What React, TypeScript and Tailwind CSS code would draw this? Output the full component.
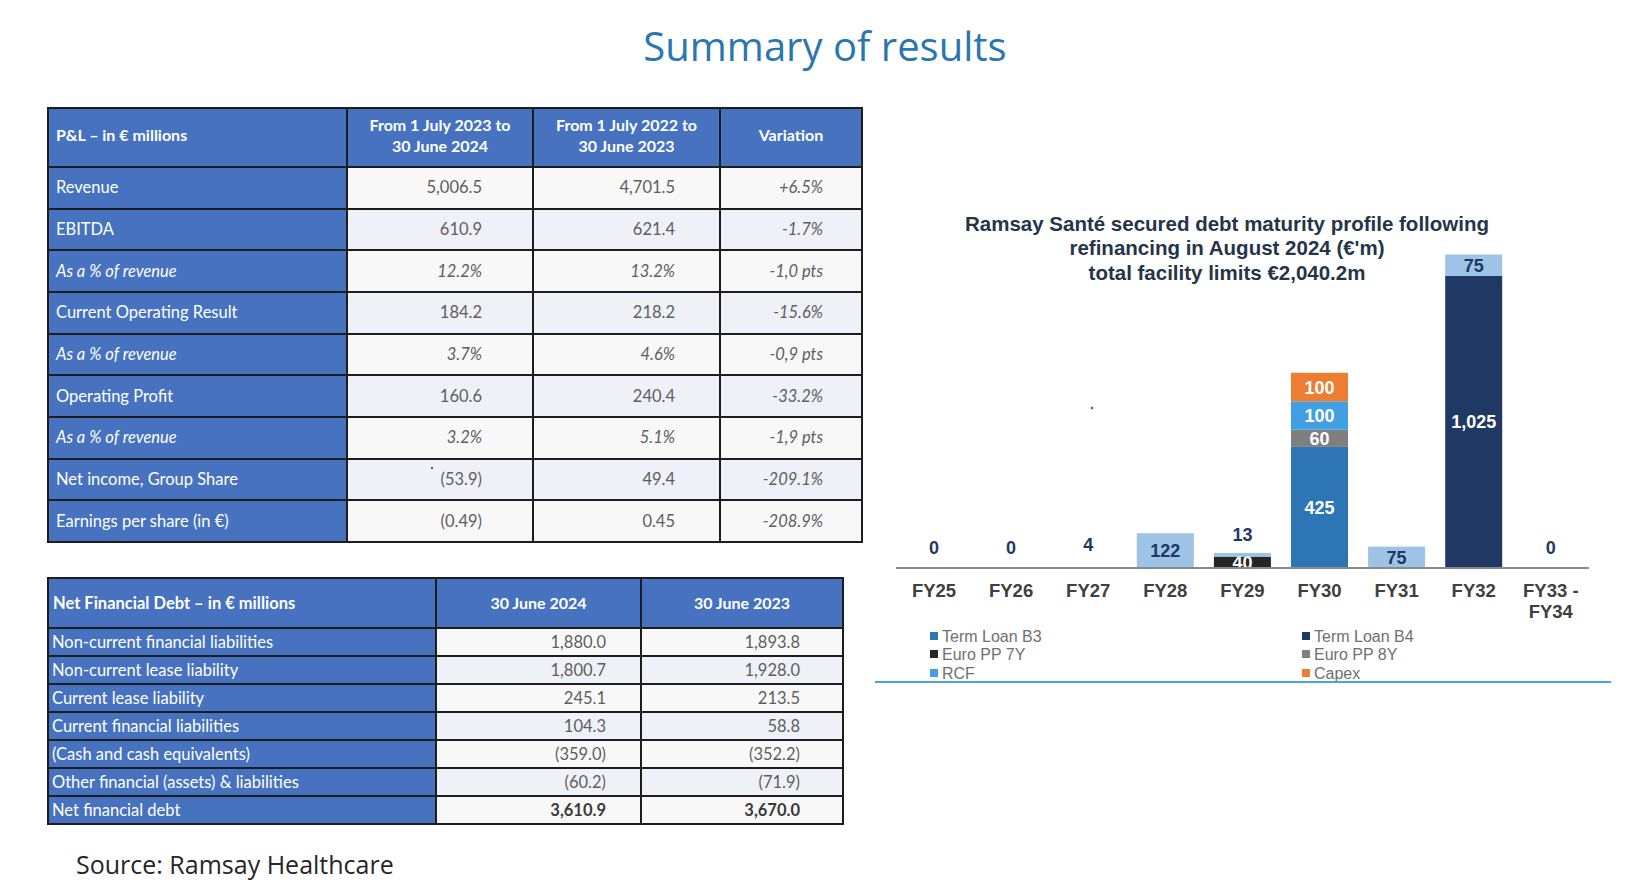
import React from "react";

type Row1 = { label: string; a: string; b: string; v: string; it?: boolean };

const pl: Row1[] = [
  { label: "Revenue", a: "5,006.5", b: "4,701.5", v: "+6.5%" },
  { label: "EBITDA", a: "610.9", b: "621.4", v: "-1.7%" },
  { label: "As a % of revenue", a: "12.2%", b: "13.2%", v: "-1,0 pts", it: true },
  { label: "Current Operating Result", a: "184.2", b: "218.2", v: "-15.6%" },
  { label: "As a % of revenue", a: "3.7%", b: "4.6%", v: "-0,9 pts", it: true },
  { label: "Operating Profit", a: "160.6", b: "240.4", v: "-33.2%" },
  { label: "As a % of revenue", a: "3.2%", b: "5.1%", v: "-1,9 pts", it: true },
  { label: "Net income, Group Share", a: "(53.9)", b: "49.4", v: "-209.1%" },
  { label: "Earnings per share (in €)", a: "(0.49)", b: "0.45", v: "-208.9%" },
];

const nfd: [string, string, string][] = [
  ["Non-current financial liabilities", "1,880.0", "1,893.8"],
  ["Non-current lease liability", "1,800.7", "1,928.0"],
  ["Current lease liability", "245.1", "213.5"],
  ["Current financial liabilities", "104.3", "58.8"],
  ["(Cash and cash equivalents)", "(359.0)", "(352.2)"],
  ["Other financial (assets) & liabilities", "(60.2)", "(71.9)"],
  ["Net financial debt", "3,610.9", "3,670.0"],
];

const cellB = "border-2 border-[#1d1d1d]";

function PLTable() {
  return (
    <table className="table-fixed border-collapse w-[814px] font-['Lato',sans-serif]">
      <colgroup>
        <col className="w-[299px]" />
        <col className="w-[186px]" />
        <col className="w-[187px]" />
        <col className="w-[142px]" />
      </colgroup>
      <thead>
        <tr className="h-[59px] bg-[#4672c0] text-white">
          <th className={`${cellB} text-left pl-[7px] pb-[6px] text-[16px] font-bold`}>P&amp;L – in € millions</th>
          <th className={`${cellB} text-center pb-[6px] text-[16px] leading-[21px] font-bold`}>
            From 1 July 2023 to
            <br />
            30 June 2024
          </th>
          <th className={`${cellB} text-center pb-[6px] text-[16px] leading-[21px] font-bold`}>
            From 1 July 2022 to
            <br />
            30 June 2023
          </th>
          <th className={`${cellB} text-center pb-[6px] text-[16px] font-bold`}>Variation</th>
        </tr>
      </thead>
      <tbody>
        {pl.map((r, i) => {
          const bg = i % 2 === 0 ? "bg-[#f8f8f8]" : "bg-[#eef1f8]";
          const it = r.it ? "italic" : "";
          return (
            <tr key={i} className="h-[41.67px] text-[16.5px]">
              <td className={`${cellB} bg-[#4672c0] text-white pl-[7px] ${it}`}>{r.label}</td>
              <td className={`${cellB} ${bg} text-right pr-[50px] text-[#5e5e5e] ${it} relative`}>
                {i === 7 && <span className="absolute left-[83px] top-[7px] w-[2px] h-[2px] bg-[#3b4fd0]" />}
                {r.a}
              </td>
              <td className={`${cellB} ${bg} text-right pr-[44px] text-[#5e5e5e] ${it}`}>{r.b}</td>
              <td className={`${cellB} ${bg} text-right pr-[38px] text-[#5e5e5e] italic`}>{r.v}</td>
            </tr>
          );
        })}
      </tbody>
    </table>
  );
}

function NFDTable() {
  return (
    <table className="table-fixed border-collapse w-[795px] font-['Lato',sans-serif]">
      <colgroup>
        <col className="w-[388px]" />
        <col className="w-[205px]" />
        <col className="w-[202px]" />
      </colgroup>
      <thead>
        <tr className="h-[50px] bg-[#4672c0] text-white">
          <th className={`${cellB} text-left pl-[4px] text-[16.5px] font-bold`}>Net Financial Debt – in € millions</th>
          <th className={`${cellB} text-center text-[16px] font-bold`}>30 June 2024</th>
          <th className={`${cellB} text-center text-[16px] font-bold`}>30 June 2023</th>
        </tr>
      </thead>
      <tbody>
        {nfd.map((r, i) => {
          const bg = i % 2 === 0 ? "bg-[#f8f8f8]" : "bg-[#eef1f8]";
          const last = i === nfd.length - 1;
          const val = last ? "font-bold text-[#3a3a3a]" : "text-[#5e5e5e]";
          return (
            <tr key={i} className="h-[28px] text-[16.5px] leading-[20px]">
              <td className={`${cellB} bg-[#4672c0] text-white pl-[3px]`}>{r[0]}</td>
              <td className={`${cellB} ${bg} text-right pr-[34px] ${val}`}>{r[1]}</td>
              <td className={`${cellB} ${bg} text-right pr-[42px] ${val}`}>{r[2]}</td>
            </tr>
          );
        })}
      </tbody>
    </table>
  );
}

const K = 0.285;
const BASE = 568;
const W = 57;
const cats = ["FY25", "FY26", "FY27", "FY28", "FY29", "FY30", "FY31", "FY32", "FY33 -"];
const cx = (i: number) => 934 + i * 77.1;

const C = {
  b3: "#2e75b6",
  b4: "#1f3864",
  e7: "#262626",
  e8: "#7f7f7f",
  rcf: "#41a0e3",
  capex: "#ed7d31",
  lb: "#9dc3e6",
};

type Seg = { v: number; c: string; label?: string; lc?: string };
const stacks: Record<number, Seg[]> = {
  3: [{ v: 122, c: C.lb, label: "122", lc: "#1f3864" }],
  4: [
    { v: 40, c: C.e7, label: "40", lc: "#ffffff" },
    { v: 13, c: C.lb },
  ],
  5: [
    { v: 425, c: C.b3, label: "425", lc: "#ffffff" },
    { v: 60, c: C.e8, label: "60", lc: "#ffffff" },
    { v: 100, c: C.rcf, label: "100", lc: "#ffffff" },
    { v: 100, c: C.capex, label: "100", lc: "#ffffff" },
  ],
  6: [{ v: 75, c: C.lb, label: "75", lc: "#1f3864" }],
  7: [
    { v: 1025, c: C.b4, label: "1,025", lc: "#ffffff" },
    { v: 75, c: C.lb, label: "75", lc: "#1f3864" },
  ],
};

function Chart() {
  const bars: React.ReactNode[] = [];
  Object.entries(stacks).forEach(([k, segs]) => {
    const i = Number(k);
    let y = BASE;
    segs.forEach((s, j) => {
      const h = s.v * K;
      y -= h;
      bars.push(<rect key={`r${i}-${j}`} x={cx(i) - W / 2} y={y} width={W} height={h} fill={s.c} />);
      if (s.label) {
        bars.push(
          <text
            key={`t${i}-${j}`}
            x={cx(i)}
            y={y + h / 2 + 6.5}
            textAnchor="middle"
            fontSize={18}
            fontWeight={700}
            fill={s.lc}
          >
            {s.label}
          </text>
        );
      }
    });
  });
  const tops: [number, string, number][] = [
    [0, "0", 547],
    [1, "0", 547],
    [2, "4", 544],
    [4, "13", 534],
    [8, "0", 547],
  ];
  const legend: [number, number, string, string][] = [
    [930, 636, C.b3, "Term Loan B3"],
    [930, 654, C.e7, "Euro PP 7Y"],
    [930, 673, C.rcf, "RCF"],
    [1302, 636, C.b4, "Term Loan B4"],
    [1302, 654, C.e8, "Euro PP 8Y"],
    [1302, 673, C.capex, "Capex"],
  ];
  return (
    <svg
      width={736}
      height={481}
      viewBox="875 200 736 481"
      className="block font-['Liberation_Sans',Arial,sans-serif]"
    >
      <g fontWeight={700} fontSize={20.5} fill="#253549" textAnchor="middle">
        <text x={1227} y={231}>Ramsay Santé secured debt maturity profile following</text>
        <text x={1227} y={255}>refinancing in August 2024 (€'m)</text>
        <text x={1227} y={280}>total facility limits €2,040.2m</text>
      </g>
      <circle cx={1092} cy={408} r={1.3} fill="#5a4bd0" />
      {bars}
      <line x1={896} x2={1589} y1={BASE} y2={BASE} stroke="#8a8a8a" strokeWidth={2} />
      {tops.map(([i, t, y]) => (
        <text key={`z${i}`} x={cx(i)} y={y + 6.5} textAnchor="middle" fontSize={18} fontWeight={700} fill="#1f3864">
          {t}
        </text>
      ))}
      <g fontSize={18.5} fontWeight={700} fill="#404040" textAnchor="middle">
        {cats.map((c, i) => (
          <text key={c} x={cx(i)} y={597}>
            {c}
          </text>
        ))}
        <text x={cx(8)} y={618}>
          FY34
        </text>
      </g>
      <g fontSize={16} fill="#707070">
        {legend.map(([x, y, col, t]) => (
          <g key={t}>
            <rect x={x} y={y - 4} width={8} height={8} fill={col} />
            <text x={x + 12} y={y + 6}>
              {t}
            </text>
          </g>
        ))}
      </g>
    </svg>
  );
}

export default function App() {
  return (
    <div className="w-[1650px] h-[894px] bg-white overflow-hidden font-['Open_Sans',sans-serif]">
      <h1 className="pt-[19px] text-center text-[40px] leading-[54px] font-normal text-[#2b76b0]">
        Summary of results
      </h1>
      <div className="mt-[34px] flex">
        <div className="pl-[47px] w-[861px] shrink-0">
          <PLTable />
          <div className="mt-[34px]">
            <NFDTable />
          </div>
          <p className="mt-[22px] pl-[29px] text-[25px] leading-[34px] text-[#262626]">Source: Ramsay Healthcare</p>
        </div>
        <div className="ml-[14px] w-[736px] pt-[93px]">
          <Chart />
          <div className="h-[2px] bg-[#4aa3df]" />
        </div>
      </div>
    </div>
  );
}
